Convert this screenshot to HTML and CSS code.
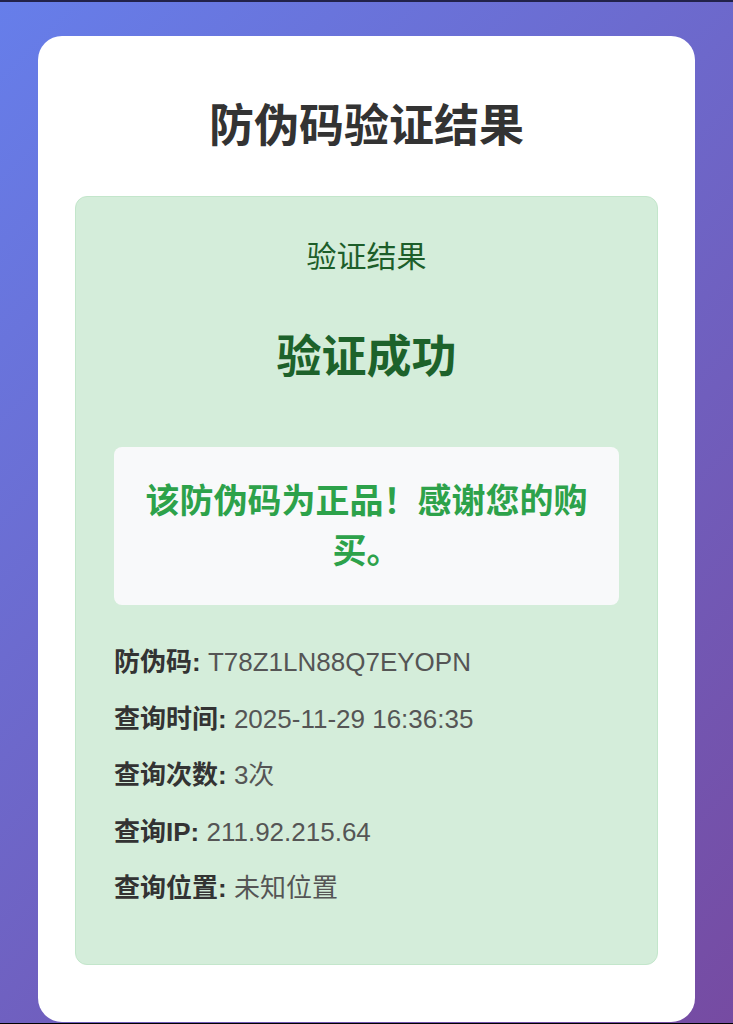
FILE: index.html
```html
<!DOCTYPE html>
<html lang="zh-CN">
<head>
  <meta charset="UTF-8" />
  <title>防伪码验证结果</title>
  <meta name="viewport" content="width=device-width, initial-scale=1" />
  <link rel="stylesheet" href="styles.css">
</head>
<body>

  <div class="container">
    <h1>防伪码验证结果</h1>

    <div class="result success">
      <div class="result-label">验证结果</div>
      <div class="result-status">验证成功</div>

      <div class="message">该防伪码为正品！感谢您的购买。</div>

      <div class="details">
        <p><strong>防伪码:</strong> T78Z1LN88Q7EYOPN</p>
        <p><strong>查询时间:</strong> 2025-11-29 16:36:35</p>
        <p><strong>查询次数:</strong> 3次</p>
        <p><strong>查询IP:</strong> 211.92.215.64</p>
        <p><strong>查询位置:</strong> 未知位置</p>
      </div>
    </div>
  </div>

</body>
</html>
```

FILE: styles.css
```css
html {
  background: #000;
}

body {
  margin: 0;
  height: 987px;
  padding: 34px 38px 0;
  border-top: 2px solid #22224a;
  background: linear-gradient(135deg, #667eea 0%, #764ba2 100%);
  font-family: 'Liberation Sans', Arial, 'Noto Sans CJK SC', sans-serif;
  color: #333;
}

.container {
  background: #fff;
  border-radius: 24px;
  padding: 37px 37px 57px;
}

h1 {
  margin: 27px 0 42px;
  font-size: 45px;
  line-height: 54px;
  text-align: center;
  color: #333;
}

.result {
  border-radius: 12px;
  padding: 38px;
}

.result.success {
  background: #d4edda;
  border: 1px solid #c3e6cb;
}

.result-label {
  text-align: center;
  font-size: 30px;
  line-height: 44px;
  color: #1d5e2a;
}

.result-status {
  margin-top: 49px;
  text-align: center;
  font-size: 45px;
  line-height: 60px;
  font-weight: bold;
  color: #1d622b;
}

.message {
  margin-top: 59px;
  background: #f8f9fa;
  border-radius: 8px;
  padding: 29px 20px;
  text-align: center;
  font-size: 34px;
  line-height: 50px;
  font-weight: bold;
  color: #2da24a;
}

.details {
  margin-top: 39px;
}

.details p {
  margin: 0 0 20.5px;
  font-size: 26px;
  line-height: 36px;
  color: #555;
}

.details p:last-child {
  margin-bottom: 20px;
}

.details strong {
  color: #333;
}
```
